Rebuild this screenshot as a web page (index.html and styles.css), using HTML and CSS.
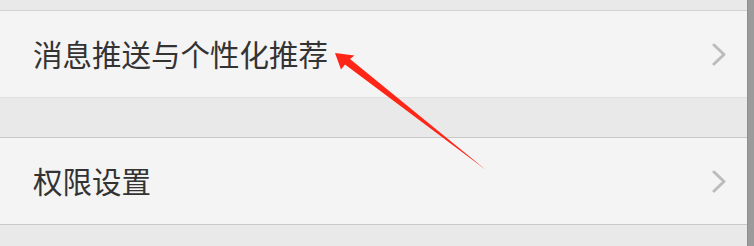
FILE: index.html
```html
<!DOCTYPE html>
<html>
<head>
<meta charset="utf-8">
<link rel="stylesheet" href="styles.css">
</head>
<body>
<div class="page">
  <div class="content">
    <div class="band band-top"></div>
    <div class="row row-first">
      <span class="label">消息推送与个性化推荐</span>
      <svg class="chev" width="15" height="23" viewBox="0 0 15 23"><polyline points="2,2 12,11.5 2,21" fill="none" stroke="#bcbcbc" stroke-width="3" stroke-linecap="round" stroke-linejoin="round"/></svg>
    </div>
    <div class="band band-mid"></div>
    <div class="row row-second">
      <span class="label">权限设置</span>
      <svg class="chev" width="15" height="23" viewBox="0 0 15 23"><polyline points="2,2 12,11.5 2,21" fill="none" stroke="#bcbcbc" stroke-width="3" stroke-linecap="round" stroke-linejoin="round"/></svg>
    </div>
    <div class="band band-bottom"></div>
  </div>
  <div class="scrollbar"></div>
  <svg class="arrow" width="754" height="246" viewBox="0 0 754 246">
    <polygon points="335,53 354.5,55.5 350,59 486,170 345,64.5 341,69.5" fill="#ff2617"/>
  </svg>
</div>
</body>
</html>
```
FILE: styles.css
```css
html, body {
  margin: 0;
  padding: 0;
}
body {
  width: 754px;
  height: 246px;
  overflow: hidden;
  background: #e9e9e9;
  font-family: "Noto Sans CJK SC", "Noto Sans", sans-serif;
}
.page {
  position: relative;
  display: flex;
  width: 754px;
  height: 246px;
}
.content {
  flex: 1;
  display: flex;
  flex-direction: column;
}
.band {
  background: #e9e9e9;
}
.band-top {
  height: 10px;
  border-bottom: 1px solid #d2d2d2;
}
.band-mid {
  height: 39px;
  border-top: 1px solid #e0e0e0;
  border-bottom: 1px solid #c9c9c9;
}
.band-bottom {
  flex: 1;
  border-top: 1px solid #c9c9c9;
}
.row {
  height: 86px;
  background: #f4f4f4;
  display: flex;
  align-items: center;
  justify-content: space-between;
  padding: 0 20px 0 33px;
}
.label {
  font-size: 29.5px;
  color: #333333;
  line-height: 1;
}
.chev {
  display: block;
}
.scrollbar {
  width: 6px;
  background: #9b9b9b;
  border-left: 1px solid #8e8e8e;
}
.arrow {
  position: absolute;
  left: 0;
  top: 0;
  pointer-events: none;
}
```
